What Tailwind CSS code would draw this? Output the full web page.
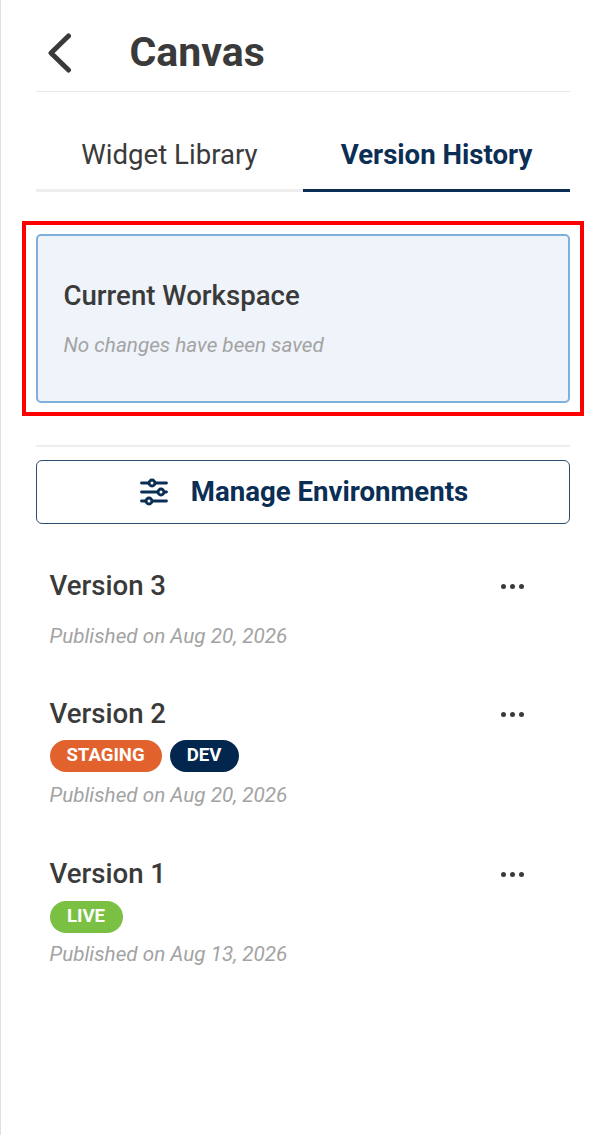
<!DOCTYPE html>
<html lang="en">
<head>
    <meta charset="UTF-8">
    <meta name="viewport" content="width=device-width, initial-scale=1.0">
    <title>Canvas</title>
    <script src="https://cdn.jsdelivr.net/npm/@tailwindcss/browser@4"></script>
</head>
<body class="bg-white font-['Roboto',sans-serif] text-[#3a3a3a]">
    <div class="relative h-[1135px] border-l border-[#e0e0e0] pl-[35px] pr-[32px]">
        <!-- header -->
        <header class="flex items-center h-[92px] pt-[14px] border-b border-[#e8e8e8]">
            <svg class="w-[26px] h-[40px] ml-[10px]" viewBox="0 0 26 40" fill="none" stroke="#3a3a3a" stroke-width="5" stroke-linecap="round" stroke-linejoin="round"><path d="M22.5 3 L5 20 L22.5 37"/></svg>
            <h1 class="ml-[57.5px] text-[41px] font-bold leading-none">Canvas</h1>
        </header>

        <!-- tabs -->
        <div class="flex h-[100px] text-[27.6px]">
            <div class="w-[267px] flex items-center justify-center border-b-[3px] border-[#eeeeee] pt-[28px]">Widget Library</div>
            <div class="flex-1 flex items-center justify-center border-b-[3px] border-[#0b2e55] text-[#0b2e55] font-bold pt-[28px]">Version History</div>
        </div>

        <!-- current workspace -->
        <div class="mt-[42px] h-[169px] rounded-[5px] border-2 border-[#7fb0dc] bg-[#eff3fa] pl-[25.5px] pt-[42px]">
            <div class="text-[27.6px] font-medium leading-[36px]">Current Workspace</div>
            <div class="mt-[18px] text-[20.7px] italic text-[#a3a3a3] leading-[26px]">No changes have been saved</div>
        </div>

        <div class="mt-[42px] border-t-2 border-[#eeeeee]"></div>

        <button class="mt-[13px] w-full h-[64px] flex items-center justify-center gap-[23px] rounded-[6px] border border-[#2f4d70] text-[#0b2e55] text-[27.6px] font-bold">
            <svg class="w-[28px] h-[28px] ml-[2px]" viewBox="0 0 28 28" fill="none" stroke="#0b2e55" stroke-width="2.8" stroke-linecap="round">
                <path d="M1.5 5H9M15 5H26.5M1.5 14H18M24 14H26.5M1.5 23H6M12 23H26.5"/>
                <circle cx="12" cy="5" r="3"/><circle cx="21" cy="14" r="3"/><circle cx="9" cy="23" r="3"/>
            </svg>
            <span>Manage Environments</span>
        </button>

        <!-- versions -->
        <div class="px-[13.5px]">
            <div class="mt-[43px]">
                <div class="flex items-center justify-between h-[38px]">
                    <span class="text-[27.6px] font-medium">Version 3</span>
                    <span class="flex gap-[4px] mr-[33px]"><i class="w-[5px] h-[5px] rounded-full bg-[#3a3a3a]"></i><i class="w-[5px] h-[5px] rounded-full bg-[#3a3a3a]"></i><i class="w-[5px] h-[5px] rounded-full bg-[#3a3a3a]"></i></span>
                </div>
                <div class="mt-[18px] text-[20.7px] italic text-[#a3a3a3] leading-[26px]">Published on Aug 20, 2026</div>
            </div>

            <div class="mt-[46px]">
                <div class="flex items-center justify-between h-[38px]">
                    <span class="text-[27.6px] font-medium">Version 2</span>
                    <span class="flex gap-[4px] mr-[33px]"><i class="w-[5px] h-[5px] rounded-full bg-[#3a3a3a]"></i><i class="w-[5px] h-[5px] rounded-full bg-[#3a3a3a]"></i><i class="w-[5px] h-[5px] rounded-full bg-[#3a3a3a]"></i></span>
                </div>
                <div class="mt-[7px] flex gap-[8px] text-white text-[18.6px] font-bold">
                    <span class="h-[32px] w-[112px] rounded-full bg-[#e2622e] flex items-center justify-center">STAGING</span>
                    <span class="h-[32px] w-[69px] rounded-full bg-[#03264f] flex items-center justify-center">DEV</span>
                </div>
                <div class="mt-[10px] text-[20.7px] italic text-[#a3a3a3] leading-[26px]">Published on Aug 20, 2026</div>
            </div>

            <div class="mt-[47px]">
                <div class="flex items-center justify-between h-[38px]">
                    <span class="text-[27.6px] font-medium">Version 1</span>
                    <span class="flex gap-[4px] mr-[33px]"><i class="w-[5px] h-[5px] rounded-full bg-[#3a3a3a]"></i><i class="w-[5px] h-[5px] rounded-full bg-[#3a3a3a]"></i><i class="w-[5px] h-[5px] rounded-full bg-[#3a3a3a]"></i></span>
                </div>
                <div class="mt-[8px] flex text-white text-[18.6px] font-bold">
                    <span class="h-[32px] w-[73px] rounded-full bg-[#7ac143] flex items-center justify-center">LIVE</span>
                </div>
                <div class="mt-[8px] text-[20.7px] italic text-[#a3a3a3] leading-[26px]">Published on Aug 13, 2026</div>
            </div>
        </div>

        <!-- annotation box over the workspace card -->
        <div class="absolute left-[21px] top-[221px] w-[562px] h-[195px] border-[4px] border-[#ff0000]"></div>
    </div>
</body>
</html>
